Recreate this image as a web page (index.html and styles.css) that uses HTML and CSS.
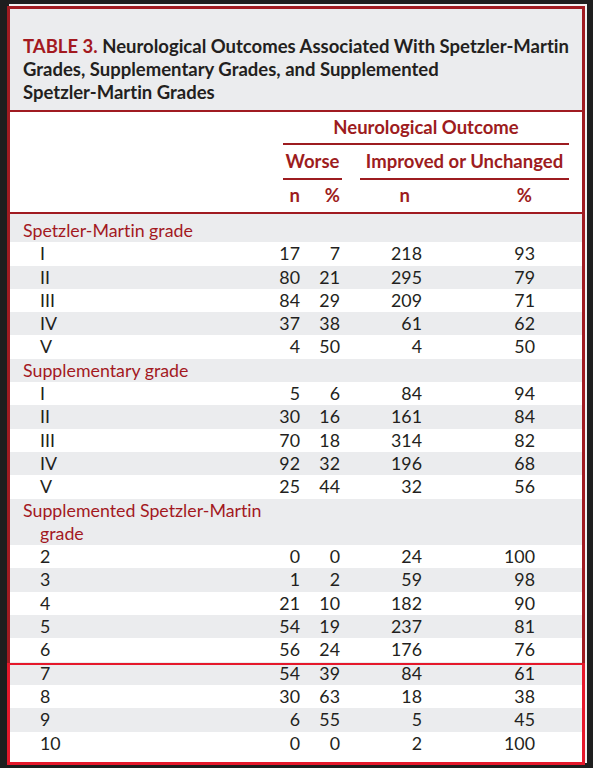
FILE: index.html
```html
<!DOCTYPE html>
<html lang="en">
<head>
<meta charset="utf-8">
<title>Table 3</title>
<link rel="stylesheet" href="styles.css">
</head>
<body>
<div class="card">
  <div class="title"><span class="tnum">TABLE 3.</span> <span class="tmain">Neurological Outcomes Associated With Spetzler-Martin Grades, Supplementary Grades, and Supplemented<br>Spetzler-Martin Grades</span></div>
  <div class="head">
    <div class="h-outcome">Neurological Outcome</div>
    <div class="h-worse">Worse</div>
    <div class="h-impr">Improved or Unchanged</div>
    <div class="hc c1">n</div>
    <div class="hc c2">%</div>
    <div class="hc c3 h3">n</div>
    <div class="hc c4 h4">%</div>
  </div>
  <div class="tbody">
    <div class="row alt sec"><span class="sect">Spetzler-Martin grade</span></div>
    <div class="row"><span class="lbl">I</span><span class="c1">17</span><span class="c2">7</span><span class="c3">218</span><span class="c4">93</span></div>
    <div class="row alt"><span class="lbl">II</span><span class="c1">80</span><span class="c2">21</span><span class="c3">295</span><span class="c4">79</span></div>
    <div class="row"><span class="lbl">III</span><span class="c1">84</span><span class="c2">29</span><span class="c3">209</span><span class="c4">71</span></div>
    <div class="row alt"><span class="lbl">IV</span><span class="c1">37</span><span class="c2">38</span><span class="c3">61</span><span class="c4">62</span></div>
    <div class="row"><span class="lbl">V</span><span class="c1">4</span><span class="c2">50</span><span class="c3">4</span><span class="c4">50</span></div>
    <div class="row alt sec"><span class="sect">Supplementary grade</span></div>
    <div class="row"><span class="lbl">I</span><span class="c1">5</span><span class="c2">6</span><span class="c3">84</span><span class="c4">94</span></div>
    <div class="row alt"><span class="lbl">II</span><span class="c1">30</span><span class="c2">16</span><span class="c3">161</span><span class="c4">84</span></div>
    <div class="row"><span class="lbl">III</span><span class="c1">70</span><span class="c2">18</span><span class="c3">314</span><span class="c4">82</span></div>
    <div class="row alt"><span class="lbl">IV</span><span class="c1">92</span><span class="c2">32</span><span class="c3">196</span><span class="c4">68</span></div>
    <div class="row"><span class="lbl">V</span><span class="c1">25</span><span class="c2">44</span><span class="c3">32</span><span class="c4">56</span></div>
    <div class="row alt sec"><span class="sect">Supplemented Spetzler-Martin grade</span></div>
    <div class="row"><span class="lbl">2</span><span class="c1">0</span><span class="c2">0</span><span class="c3">24</span><span class="c4">100</span></div>
    <div class="row alt"><span class="lbl">3</span><span class="c1">1</span><span class="c2">2</span><span class="c3">59</span><span class="c4">98</span></div>
    <div class="row"><span class="lbl">4</span><span class="c1">21</span><span class="c2">10</span><span class="c3">182</span><span class="c4">90</span></div>
    <div class="row alt"><span class="lbl">5</span><span class="c1">54</span><span class="c2">19</span><span class="c3">237</span><span class="c4">81</span></div>
    <div class="row"><span class="lbl">6</span><span class="c1">56</span><span class="c2">24</span><span class="c3">176</span><span class="c4">76</span></div>
    <div class="hl">
      <div class="row alt"><span class="lbl">7</span><span class="c1">54</span><span class="c2">39</span><span class="c3">84</span><span class="c4">61</span></div>
      <div class="row"><span class="lbl">8</span><span class="c1">30</span><span class="c2">63</span><span class="c3">18</span><span class="c4">38</span></div>
      <div class="row alt"><span class="lbl">9</span><span class="c1">6</span><span class="c2">55</span><span class="c3">5</span><span class="c4">45</span></div>
      <div class="row"><span class="lbl">10</span><span class="c1">0</span><span class="c2">0</span><span class="c3">2</span><span class="c4">100</span></div>
    </div>
  </div>
</div>
</body>
</html>
```
FILE: styles.css
```css
html, body {
  margin: 0;
  padding: 0;
  background: #1e1e1e;
}
body {
  padding: 6px 0 0 7px;
  height: 768px;
  box-sizing: border-box;
  overflow: hidden;
  font-family: Lato, "Open Sans", "Liberation Sans", sans-serif;
  font-variant-ligatures: none;
  color: #231f20;
}
.card {
  width: 578px;
  box-sizing: border-box;
  border: 3px solid #a01b21;
  background: #ffffff;
  box-shadow: 2px -2px 0 #f2f2f2;
}
.title {
  background: #ebecee;
  padding: 26px 6px 6px 13px;
  font-size: 18.5px;
  line-height: 23px;
  font-weight: 700;
  color: #231f20;
  border-bottom: 2px solid #a01b21;
}
.tnum {
  color: #a3191f;
}
.head {
  display: grid;
  grid-template-columns: 260px 30px 42px 18px 62px 147px 13px;
  grid-template-rows: auto auto auto;
  row-gap: 6px;
  padding: 5px 0 7px;
  border-bottom: 2px solid #a01b21;
  font-size: 18.5px;
  line-height: 20px;
  font-weight: 700;
  color: #9d1c20;
}
.h-outcome {
  grid-row: 1;
  grid-column: 2 / 7;
  margin-left: 13px;
  text-align: center;
  padding-bottom: 6px;
  border-bottom: 2px solid #9d1c20;
}
.h-worse {
  grid-row: 2;
  grid-column: 2 / 4;
  margin-left: 13px;
  text-align: center;
  padding-bottom: 7px;
  border-bottom: 2px solid #9d1c20;
}
.h-impr {
  grid-row: 2;
  grid-column: 5 / 7;
  text-align: center;
  padding-bottom: 7px;
  border-bottom: 2px solid #9d1c20;
}
.hc {
  grid-row: 3;
  margin-top: -1px;
}
.tbody {
  padding-top: 5px;
  font-size: 17.8px;
}
.row {
  display: grid;
  grid-template-columns: 260px 30px 42px 18px 62px 147px 13px;
  line-height: 23.3px;
  height: 23.3px;
}
.row.alt {
  background: #ebecee;
}
.row.sec {
  height: auto;
}
.tbody > .row.sec:first-child {
  margin-top: -5px;
  padding-top: 5px;
}
.sect {
  grid-column: 1 / -1;
  width: 245px;
  padding-left: 30px;
  text-indent: -17px;
  color: #a3191f;
}
.lbl {
  grid-column: 1;
  padding-left: 30px;
}
.c1 {
  grid-column: 2;
  text-align: right;
}
.c2 {
  grid-column: 3;
  text-align: right;
  padding-right: 2px;
}
.c3 {
  grid-column: 5;
  text-align: right;
}
.c4 {
  grid-column: 6;
  text-align: right;
  padding-right: 34px;
}
.hc.h3 {
  padding-right: 12px;
}
.hc.h4 {
  padding-right: 37px;
}
.hl {
  position: relative;
  padding-bottom: 7px;
}
.hl::after {
  content: "";
  position: absolute;
  top: 1px;
  left: -3px;
  right: -3px;
  bottom: -3px;
  border: 3px solid #e5182b;
  border-top-width: 2px;
  pointer-events: none;
}
```
